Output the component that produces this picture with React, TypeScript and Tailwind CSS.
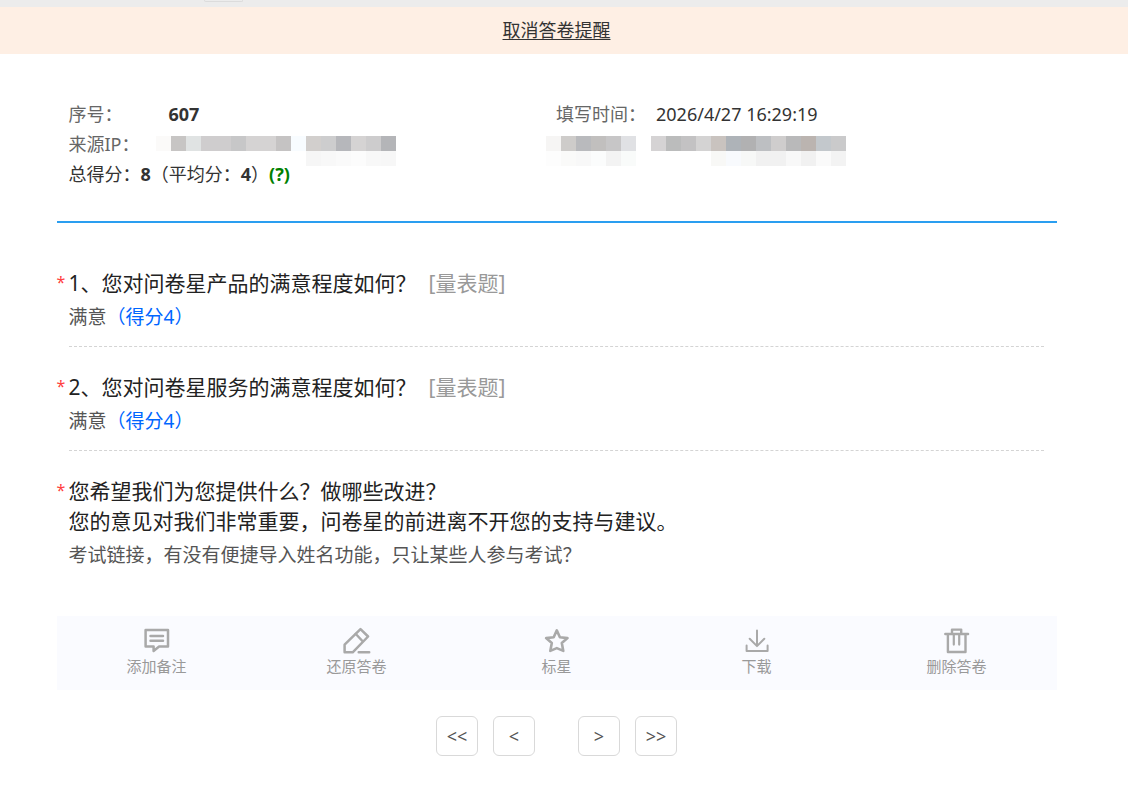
import React from "react";

const latin = "font-['Noto_Sans','Noto_Sans_CJK_SC',sans-serif]";

type Row = (string | null)[];

const ipMask: Row[] = [
  ["#fbfaf9", "#c7c5c4", "#e0e3e3", "#cfcdce", "#cfcdce", "#c7c7c8", "#d5d3d3", "#d5d3d3", "#c5c3c3", "#f8fcff", "#d2cfcd", "#cdcdce", "#b6b7bb", "#d5d3d3", "#cdcccd", "#b4b5b8"],
  [null, null, null, null, null, null, null, null, null, null, "#f6f6f6", "#f8f8f8", "#fafafa", "#fcfcfc", "#f8f8f8", "#f7f7f7"],
];

const sourceMask: Row[] = [
  ["#f6f5f4", "#ceccca", "#b9babd", "#c1bfbe", "#c7c6c7", "#e0e1e4", null, "#d5d3d4", "#bbbcbc", "#c3c2c3", "#d4d3d3", "#c9c3bf", "#aeb3b8", "#b1b1b2", "#bdbfc2", "#cfcdcd", "#b9b9ba", "#bbb4b0", "#c3c8cc", "#cacacb"],
  ["#fdfdfd", "#fafaf9", "#f8f8f8", "#fbfcfc", "#f3f3f3", "#f9fbfa", null, null, null, null, null, "#f8f8f6", "#f8fafd", "#f7f8f7", "#f1f1f1", "#f1f1f1", "#f8f8f8", "#f1f1f1", "#fafafa", "#f3f3f3"],
];

function Mask({ rows }: { rows: Row[] }) {
  return (
    <div aria-hidden="true" className="mt-[7px] h-[23px] shrink-0">
      {rows.map((row, r) => (
        <div key={r} className="flex">
          {row.map((color, c) => (
            <span key={c} className="size-[15px] shrink-0" style={{ backgroundColor: color ?? "transparent" }} />
          ))}
        </div>
      ))}
    </div>
  );
}

function Question({ title, kind, children, last }: { title: React.ReactNode; kind?: string; children: React.ReactNode; last?: boolean }) {
  return (
    <section className="pr-[13px] pt-[22px]">
      <div className="flex leading-[30px]">
        <span className="w-3 shrink-0 pt-0.5 text-base text-[#ff4040]">*</span>
        <h2 className="text-[21px] text-[#222]">
          {title}
          {kind && <span className="ml-3 text-[#999]">[{kind}]</span>}
        </h2>
      </div>
      <div className={last ? "ml-3 pb-[46px] pt-1 text-[19px] leading-[30px] text-[#555]" : "ml-3 border-b border-dashed border-[#d4d4d4] pb-[14px] pt-1 text-[19px] leading-[30px] text-[#555]"}>
        {children}
      </div>
    </section>
  );
}

const svgProps = { width: 28, height: 28, viewBox: "0 0 28 28", fill: "none", stroke: "#a9a9a9", strokeWidth: 2, strokeLinejoin: "round" as const, strokeLinecap: "round" as const, "aria-hidden": true };

const actions = [
  {
    label: "添加备注",
    icon: (
      <svg {...svgProps}>
        <path d="M2.6 3h22.4v16.6h-8.9l-5.5 4.3v-4.3h-8z" strokeWidth="2.5" />
        <path d="M7.5 9h12.5M7.5 13.8h12.5" strokeWidth="2.5" />
      </svg>
    ),
  },
  {
    label: "还原答卷",
    icon: (
      <svg {...svgProps}>
        <path d="M17.5 2.1l7.6 7.4-15.4 15.8H1.6v-7.6z" strokeWidth="2.5" />
        <path d="M12.8 7l6.6 7M15.7 25.3h10.5" strokeWidth="2.5" />
      </svg>
    ),
  },
  {
    label: "标星",
    icon: (
      <svg {...svgProps}>
        <path d="M13.8 3.4l3.1 6.8 7.6.9-5.7 5 1.5 7.8-6.5-2.8-6.5 2.8 1.5-7.8-5.7-5 7.6-.9z" strokeWidth="2.6" />
      </svg>
    ),
  },
  {
    label: "下载",
    icon: (
      <svg {...svgProps}>
        <path d="M14 3.6v15.4M6.7 11.8l7.3 7.3 7.3-7.3M3.6 18.6v5.5h21v-5.5" strokeWidth="2" />
      </svg>
    ),
  },
  {
    label: "删除答卷",
    icon: (
      <svg {...svgProps}>
        <path d="M2.3 7h22.8M4.9 7v18h17.6v-18M9 7V2.6h9.2v4.4" strokeWidth="2.4" />
        <path d="M10.8 8v9.6M16.2 8v9.6" strokeWidth="2.2" />
      </svg>
    ),
  },
];

function PageButton({ children, label }: { children: string; label: string }) {
  return (
    <button type="button" aria-label={label} className="h-10 w-[42px] rounded-md border border-[#d9d9d9] bg-white text-[18px] text-[#555]">
      {children}
    </button>
  );
}

export default function App() {
  return (
    <div className={`min-h-screen bg-white text-[#333] ${latin}`}>
      <div className="h-[7px] bg-[#ececec] pl-[204px]">
        <div className="h-0.5 w-[39px] rounded-b-sm border border-t-0 border-[#dcdcdc]" />
      </div>
      <div className="flex h-[47px] items-center justify-center bg-[#feefe4] pr-[15px]">
        <a href="#" className="text-[18px] underline underline-offset-2">取消答卷提醒</a>
      </div>
      <div className="pr-[15px]">
        <main className="mx-auto max-w-[1000px]">
          <header className="border-b-2 border-[#2a9ef0] pb-8 pl-3 pr-[13px] pt-[45px] text-[18px] leading-[30px]">
            <div className="grid grid-cols-2">
              <div className="flex h-[30px]">
                <span className="w-[100px] text-[#666]">序号：</span>
                <strong>607</strong>
              </div>
              <div className="flex h-[30px]">
                <span className="w-[100px] text-[#666]">填写时间：</span>
                <span>2026/4/27 16:29:19</span>
              </div>
              <div className="flex h-[30px]">
                <span className="w-[87px] shrink-0 whitespace-nowrap text-[#666]">来源IP：</span>
                <Mask rows={ipMask} />
              </div>
              <div className="-ml-2.5 flex h-[30px]">
                <Mask rows={sourceMask} />
              </div>
            </div>
            <p>
              总得分：<strong>8</strong>（平均分：<strong>4</strong>）
              <a href="#" className="font-bold text-[#008000]">(?)</a>
            </p>
          </header>

          <div className="pt-[23px]">
            <Question title="1、您对问卷星产品的满意程度如何？" kind="量表题">
              满意<span className="text-[#0066ff]">（得分4）</span>
            </Question>
            <div className="h-[3px]" />
            <Question title="2、您对问卷星服务的满意程度如何？" kind="量表题">
              满意<span className="text-[#0066ff]">（得分4）</span>
            </Question>
            <div className="h-[3px]" />
            <Question last title={<>您希望我们为您提供什么？做哪些改进？<br />您的意见对我们非常重要，问卷星的前进离不开您的支持与建议。</>}>
              考试链接，有没有便捷导入姓名功能，只让某些人参与考试？
            </Question>
          </div>

          <div className="grid h-[74px] grid-cols-5 bg-[#fafbff]">
            {actions.map((action) => (
              <button key={action.label} type="button" className="flex flex-col items-center pt-[11px] text-[15px] leading-[22px] text-[#999]">
                {action.icon}
                {action.label}
              </button>
            ))}
          </div>

          <nav aria-label="答卷翻页" className="flex justify-center gap-[43px] py-[26px]">
            <div className="flex gap-[15px]">
              <PageButton label="第一份">{"<<"}</PageButton>
              <PageButton label="上一份">{"<"}</PageButton>
            </div>
            <div className="flex gap-[15px]">
              <PageButton label="下一份">{">"}</PageButton>
              <PageButton label="最后一份">{">>"}</PageButton>
            </div>
          </nav>
        </main>
      </div>
    </div>
  );
}
